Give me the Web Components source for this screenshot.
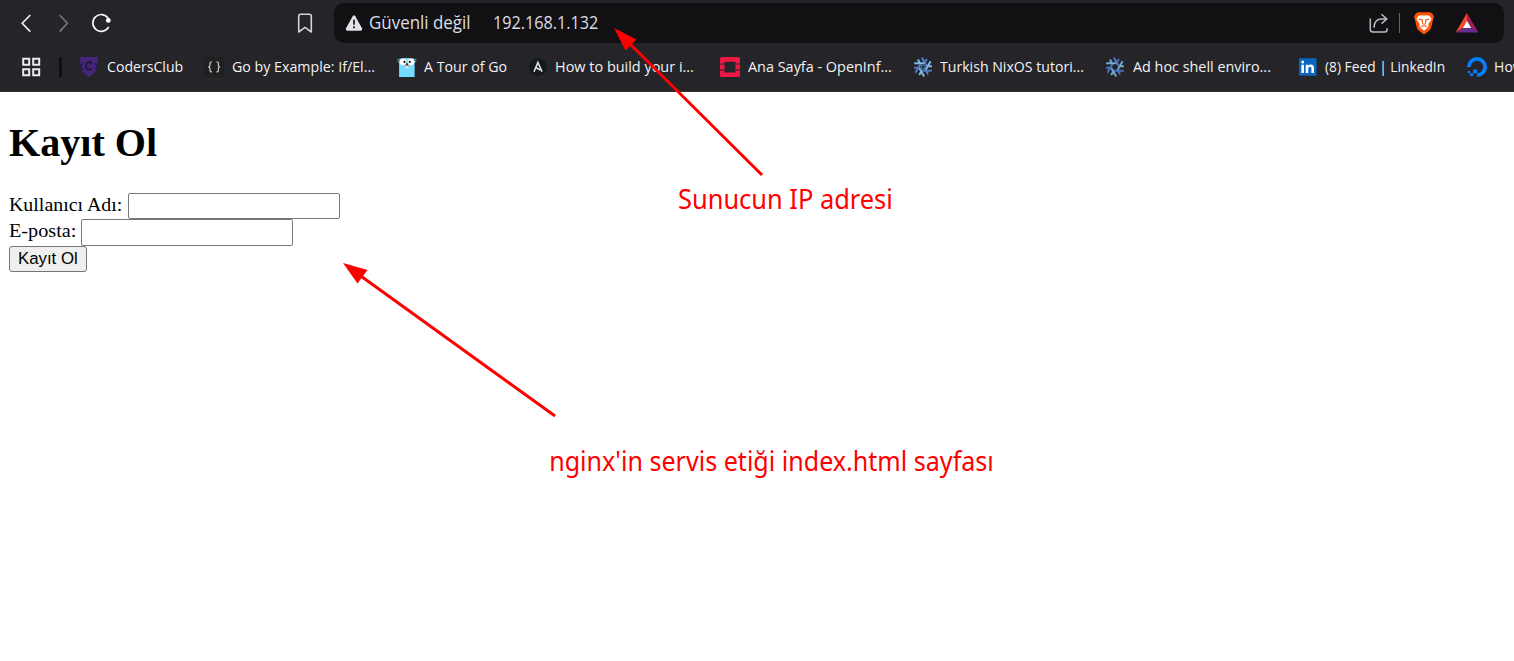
<!DOCTYPE html>
<html lang="tr">
<head>
<meta charset="utf-8">
<title>Kayıt Ol</title>
<style>
html,body{margin:0;height:100%;overflow:hidden;background:#fff}
</style>
</head>
<body>
<browser-window></browser-window>
<script>
const canvas = document.createElement('canvas').getContext('2d');

/* Text whose ink spans exactly the width given in the "w" attribute. */
class FitLabel extends HTMLElement {
  connectedCallback() {
    if (this.shadowRoot) return;
    const root = this.attachShadow({mode: 'open'});
    root.innerHTML = `<style>
      :host{display:block;flex:none;white-space:pre}
      span{display:inline-block;transform-origin:0 50%}
    </style><span><slot></slot></span>`;
    const cs = getComputedStyle(this);
    canvas.font = `${cs.fontWeight} ${cs.fontSize} ${cs.fontFamily}`;
    const m = canvas.measureText(this.textContent);
    const w = parseFloat(this.getAttribute('w'));
    const s = w / (m.actualBoundingBoxRight + m.actualBoundingBoxLeft);
    this.style.width = w + 'px';
    root.querySelector('span').style.transform =
      `translateX(${m.actualBoundingBoxLeft * s}px) scaleX(${s})`;
  }
}
customElements.define('fit-label', FitLabel);

const flake = (a, b) => {
  let out = '';
  for (let i = 0; i < 6; i++) {
    out += `<path transform="rotate(${i * 60 - 30} 10 10)" d="M13.7 1.2V11.4M13.7 7L17.4 4.9" stroke="${i % 2 ? a : b}" stroke-width="2" fill="none"/>`;
  }
  return out;
};

const icons = {
  back: [20, 20, `<path d="M14.3 2L6.2 10.3L14.3 18.6" fill="none" stroke="#f2f2f4" stroke-width="1.6"/>`],
  forward: [20, 20, `<path d="M5.7 2L13.3 10.3L5.7 18.6" fill="none" stroke="#77767c" stroke-width="1.6"/>`],
  reload: [22, 22, `<path d="M18.2 6.2A8.4 8.4 0 1 0 18.7 14.8" fill="none" stroke="#f2f2f4" stroke-width="1.7"/><circle cx="18.3" cy="8.4" r="2.4" fill="#fff"/>`],
  save: [18, 22, `<path d="M2.7 4.2Q2.7 2.3 4.6 2.3H13.4Q15.3 2.3 15.3 4.2V20L9 15.4L2.7 20Z" fill="none" stroke="#d4d3da" stroke-width="1.6" stroke-linejoin="round"/>`],
  warn: [18, 18, `<path d="M7.7 2.2Q9 .4 10.3 2.2L17 14.3Q17.6 16.7 15.4 16.7H2.6Q.4 16.7 1 14.3Z" fill="#e3e2e8"/><path d="M9 5.8V10.8M9 12.3V14.2" stroke="#222" stroke-width="1.8"/>`],
  share: [22, 22, `<path d="M2.3 6.5V17.5Q2.3 20 4.8 20H16.6Q19.1 20 19.1 17.5V16.2M6 15.8Q6.2 6.9 13.8 6.9H19M13.5 2.2L18.8 7L13.5 11.6" fill="none" stroke="#bdbcc1" stroke-width="1.5"/>`],
  lion: [20, 24, `<path d="M3.4 1.2H16.6L18.2 3.1L19.2 3.4L20 6L19.4 7.5L17 17.2Q16.5 18.8 15.4 19.5L10 23.4L4.6 19.5Q3.4 18.8 3 17.2L.6 7.5L0 6L1 3.4L1.8 3.1Z" fill="#fb5208"/><path d="M10 4.8L12 4.3L15 4.4L17.4 7.3L16.9 9.4L14.2 13L14.7 15L13.3 17L10 19.7L6.7 17L5.3 15L5.8 13L3.1 9.4L2.6 7.3L5 4.4L8 4.3Z" fill="#fff"/><path d="M4.8 8.1L8.3 8.9L8.1 10.1L8.9 13.2M15.2 8.1L11.7 8.9L11.9 10.1L11.1 13.2M7.2 15.7L10 14.4L12.8 15.7M10 13.2V14.4" fill="none" stroke="#fb5208" stroke-width="1.1"/>`],
  bat: [24, 22, `<path d="M12 1L.7 20.5L8 16L12 9Z" fill="#ff4724"/><path d="M12 1L23.3 20.5L16 16L12 9Z" fill="#9e1f63"/><path d="M.7 20.5H23.3L16 16H8Z" fill="#662d91"/><path d="M12 8.7L16.2 16H7.8Z" fill="#fff"/>`],
  apps: [20, 20, `<g fill="none" stroke="#ecebec" stroke-width="2"><path d="M2.2 1.8H8.2V7.8H2.2ZM12.2 1.8H18.2V7.8H12.2ZM2.2 12.2H8.2V18.2H2.2ZM12.2 12.2H18.2V18.2H12.2Z"/></g>`],
  coders: [20, 20, `<path d="M1 0H19L18.7 10.2Q17.8 15 10 20Q2.2 15 1.3 10.2Z" fill="#43267a"/><g fill="none" stroke="#21183c" stroke-width="1.4"><path d="M4 6.2L.8 9.4L4 12.4M16 6.2L19.2 9.4L16 12.4"/><path d="M13 6.8Q11.9 5.4 10 5.5Q7 5.6 7 9.1Q7 12.7 10 12.8Q12 12.7 13 11.4M12 3.5L11.7 5.7" stroke-width="2"/></g>`],
  braces: [20, 20, `<path d="M0 0H20V20H0Z" fill="#202020"/><path d="M8 5H7Q6 5 6 6.2V8.3Q6 9.8 4.3 9.9Q6 10 6 11.6V13.6Q6 14.8 7 14.8H8M12.4 5H13.4Q14.4 5 14.4 6.2V8.3Q14.4 9.8 16 9.9Q14.4 10 14.4 11.6V13.6Q14.4 14.8 13.4 14.8H12.4" fill="none" stroke="#cfcfcf" stroke-width="1.2"/>`],
  gopher: [20, 20, `<path d="M.5 3.5Q.3 1.3 2.7 1.8Q10 .2 17.4 1.8Q19.7 1.3 19.3 3.7L17.6 6V20H2.1V6Z" fill="#74dcff"/><circle cx="1.8" cy="3.3" r="1" fill="#344"/><circle cx="18" cy="3.3" r="1" fill="#344"/><circle cx="6.1" cy="4.9" r="3.3" fill="#fff"/><circle cx="14" cy="4.9" r="3.3" fill="#fff"/><circle cx="7.5" cy="4.9" r="1.1" fill="#111"/><circle cx="12.8" cy="4.9" r="1.1" fill="#111"/><path d="M8.8 9.1H11.3V11H8.8Z" fill="#fff"/><ellipse cx="10" cy="8.6" rx="2.4" ry="1.2" fill="#c9a284"/><ellipse cx="10" cy="7.2" rx="1.3" ry=".9" fill="#24313a"/>`],
  arch: [20, 20, `<circle cx="10" cy="10" r="9" fill="#14191e"/><path d="M6 14.7L9.9 5.4L14 14.7M8.2 10.7L12.3 13.1" fill="none" stroke="#e4e5e6" stroke-width="1.6"/>`],
  stack: [20, 20, `<path d="M1.6 0H18.4Q20 0 20 1.6V6.1H15.5V4.7H4.5V6.1H0V1.6Q0 0 1.6 0ZM0 13.8H4.5V15.4H15.5V13.8H20V18.4Q20 20 18.4 20H1.6Q0 20 0 18.4Z" fill="#ed1944"/><path d="M0 7.7H4.5V12.3H0ZM15.5 7.7H20V12.3H15.5Z" fill="#ed1944"/><path d="M0 6.1H4.5V7.7H0ZM15.5 6.1H20V7.7H15.5ZM0 12.3H4.5V13.8H0ZM15.5 12.3H20V13.8H15.5Z" fill="#9a1736"/>`],
  nix1: [20, 20, flake('#7ebae4', '#5277c3') + `<path d="M8.3 8.2H10.3Q12.2 8.2 12.2 10Q12.2 11.8 10.3 11.8H8.3Z" fill="none" stroke="#4b79bd" stroke-width="1.1"/>`],
  nix2: [20, 20, flake('#6fa8d2', '#4b70bd')],
  linkedin: [20, 20, `<path d="M2 1.2H17.6Q18.6 1.2 18.6 2.2V17.8Q18.6 18.8 17.6 18.8H2Q1 18.8 1 17.8V2.2Q1 1.2 2 1.2Z" fill="#0a66c2"/><path d="M3.4 7.7H6V16H3.4ZM7.7 7.7H10.2V8.8Q11 7.5 12.8 7.5Q16 7.5 16 11V16H13.4V11.6Q13.4 9.8 12 9.8Q10.3 9.8 10.3 11.8V16H7.7Z" fill="#fff"/><circle cx="4.7" cy="5.1" r="1.5" fill="#fff"/>`],
  ocean: [20, 20, `<path d="M1.9 10A8.1 8.1 0 1 1 10 18.1" fill="none" stroke="#0080ff" stroke-width="3.8"/><path d="M6.2 12.4H10V16.2H6.2ZM3.1 16.2H6.2V19H3.1ZM.7 13.9H3.1V16.2H.7Z" fill="#0080ff"/>`]
};

class UiIcon extends HTMLElement {
  connectedCallback() {
    if (this.shadowRoot) return;
    const [w, h, body] = icons[this.getAttribute('name')];
    this.attachShadow({mode: 'open'}).innerHTML = `<style>
      :host{display:block;flex:none;width:${w}px;height:${h}px}
      svg{display:block}
    </style><svg width="${w}" height="${h}" viewBox="0 0 ${w} ${h}">${body}</svg>`;
  }
}
customElements.define('ui-icon', UiIcon);

class NavBar extends HTMLElement {
  connectedCallback() {
    this.attachShadow({mode: 'open'}).innerHTML = `<style>
      :host{display:flex;align-items:center;height:46px;box-sizing:border-box;padding:0 10px 0 16px}
      .save{margin-left:184px;margin-right:20px}
      .reload{margin-left:16px}
      .fwd{margin-left:18px}
      .url{flex:1;display:flex;align-items:center;height:40px;border-radius:10px;background:#111113;
        color:#dedde3;font:18px/24px "Open Sans",sans-serif}
      .url fit-label{margin-bottom:2px}
      .warn{margin:0 7px 0 11px}
      .url .ip{margin-left:25px}
      .share{margin-left:auto;margin-right:1px}
      .sep{width:1px;height:20px;background:#626166;margin:0 14px 0 8px}
      .bat{margin:0 25px 0 21px}
    </style>
    <ui-icon name="back"></ui-icon>
    <ui-icon class="fwd" name="forward"></ui-icon>
    <ui-icon class="reload" name="reload"></ui-icon>
    <ui-icon class="save" name="save"></ui-icon>
    <div class="url">
      <ui-icon class="warn" name="warn"></ui-icon>
      <fit-label w="99">Güvenli değil</fit-label>
      <fit-label class="ip" w="104">192.168.1.132</fit-label>
      <ui-icon class="share" name="share"></ui-icon>
      <div class="sep"></div>
      <ui-icon name="lion"></ui-icon>
      <ui-icon class="bat" name="bat"></ui-icon>
    </div>`;
  }
}
customElements.define('nav-bar', NavBar);

class BookmarkItem extends HTMLElement {
  connectedCallback() {
    this.attachShadow({mode: 'open'}).innerHTML = `<style>
      :host{display:flex;flex:none;align-items:center;width:${this.getAttribute('pitch')}px;gap:${this.getAttribute('gap') || 8}px}
      ::slotted(fit-label){margin-bottom:2px}
    </style><ui-icon name="${this.getAttribute('icon')}"></ui-icon><slot></slot>`;
  }
}
customElements.define('bookmark-item', BookmarkItem);

class BookmarkBar extends HTMLElement {
  connectedCallback() {
    this.attachShadow({mode: 'open'}).innerHTML = `<style>
      :host{display:flex;align-items:center;height:42px;padding-left:21px;overflow:hidden;
        color:#f3f2f4;font:15px/20px "Open Sans",sans-serif}
      .sep{flex:none;width:3px;height:20px;border-radius:2px;background:#101012;margin:0 17px 0 18px}
    </style>
    <ui-icon name="apps"></ui-icon><div class="sep"></div>
    <bookmark-item icon="coders" pitch="125"><fit-label w="76">CodersClub</fit-label></bookmark-item>
    <bookmark-item icon="braces" pitch="193"><fit-label w="142">Go by Example: If/El...</fit-label></bookmark-item>
    <bookmark-item icon="gopher" pitch="131" gap="7"><fit-label w="83">A Tour of Go</fit-label></bookmark-item>
    <bookmark-item icon="arch" pitch="192"><fit-label w="137">How to build your i...</fit-label></bookmark-item>
    <bookmark-item icon="stack" pitch="193"><fit-label w="143">Ana Sayfa - OpenInf...</fit-label></bookmark-item>
    <bookmark-item icon="nix1" pitch="192" gap="7"><fit-label w="143">Turkish NixOS tutori...</fit-label></bookmark-item>
    <bookmark-item icon="nix2" pitch="193"><fit-label w="137">Ad hoc shell enviro...</fit-label></bookmark-item>
    <bookmark-item icon="linkedin" pitch="169" gap="7"><fit-label w="119">(8) Feed | LinkedIn</fit-label></bookmark-item>
    <bookmark-item icon="ocean" pitch="60"><fit-label w="29">How</fit-label></bookmark-item>`;
  }
}
customElements.define('bookmark-bar', BookmarkBar);

class SignupForm extends HTMLElement {
  connectedCallback() {
    this.attachShadow({mode: 'open'}).innerHTML = `<style>
      :host{display:block;padding:27px 0 0 9px;color:#000;font:19.3px/26px "Liberation Serif",serif}
      h1{margin:0 0 27px;font-size:40px;line-height:47px;font-weight:bold}
      .row{display:flex;align-items:flex-start}
      .row fit-label{line-height:24px}
      input{box-sizing:border-box;width:212px;height:26px;margin:0 0 0 6px;padding:0;border:1px solid #767676;border-radius:2px;background:#fff}
      .mail input{height:27px}
      button{display:block;box-sizing:border-box;width:78px;height:26px;padding:0 0 0 9px;border:1px solid #767676;border-radius:3px;
        background:#efefef;color:#000;font:16.67px/22px "Liberation Sans",sans-serif;text-align:left}
    </style>
    <h1><fit-label w="148">Kayıt Ol</fit-label></h1>
    <div class="row"><fit-label w="113">Kullanıcı Adı:</fit-label><input aria-label="Kullanıcı Adı"></div>
    <div class="row mail"><fit-label w="66">E-posta:</fit-label><input aria-label="E-posta"></div>
    <button><fit-label w="58">Kayıt Ol</fit-label></button>`;
  }
}
customElements.define('signup-form', SignupForm);

/* Red arrows and captions drawn freely over the window. */
class AnnotationLayer extends HTMLElement {
  connectedCallback() {
    this.attachShadow({mode: 'open'}).innerHTML = `<style>
      :host{display:block;position:absolute;inset:0;pointer-events:none;color:#f00;font:27px/36px "Noto Sans",sans-serif}
      svg{display:block}
      fit-label{position:absolute}
      .ip{left:678.5px;top:181px}
      .page{left:551px;top:443px}
    </style>
    <svg width="1514" height="661" viewBox="0 0 1514 661">
      <g stroke="#f00" stroke-width="3"><path d="M762 175L628 42M555 416L358 274"/></g>
      <g fill="#f00"><path d="M614 28L636.5 39.5L625.5 50.5ZM343 263L367.5 270L357.5 283.5Z"/></g>
    </svg>
    <fit-label class="ip" w="212">Sunucun IP adresi</fit-label>
    <fit-label class="page" w="441">nginx'in servis etiği index.html sayfası</fit-label>`;
  }
}
customElements.define('annotation-layer', AnnotationLayer);

class BrowserWindow extends HTMLElement {
  connectedCallback() {
    this.attachShadow({mode: 'open'}).innerHTML = `<style>
      :host{display:block;position:relative;width:1514px;height:661px;overflow:hidden;background:#fff}
      header{box-sizing:border-box;height:92px;background:#252429;border-bottom:1px solid #333237;overflow:hidden}
    </style>
    <header><nav-bar></nav-bar><bookmark-bar></bookmark-bar></header>
    <signup-form></signup-form>
    <annotation-layer></annotation-layer>`;
  }
}
customElements.define('browser-window', BrowserWindow);
</script>
</body>
</html>
